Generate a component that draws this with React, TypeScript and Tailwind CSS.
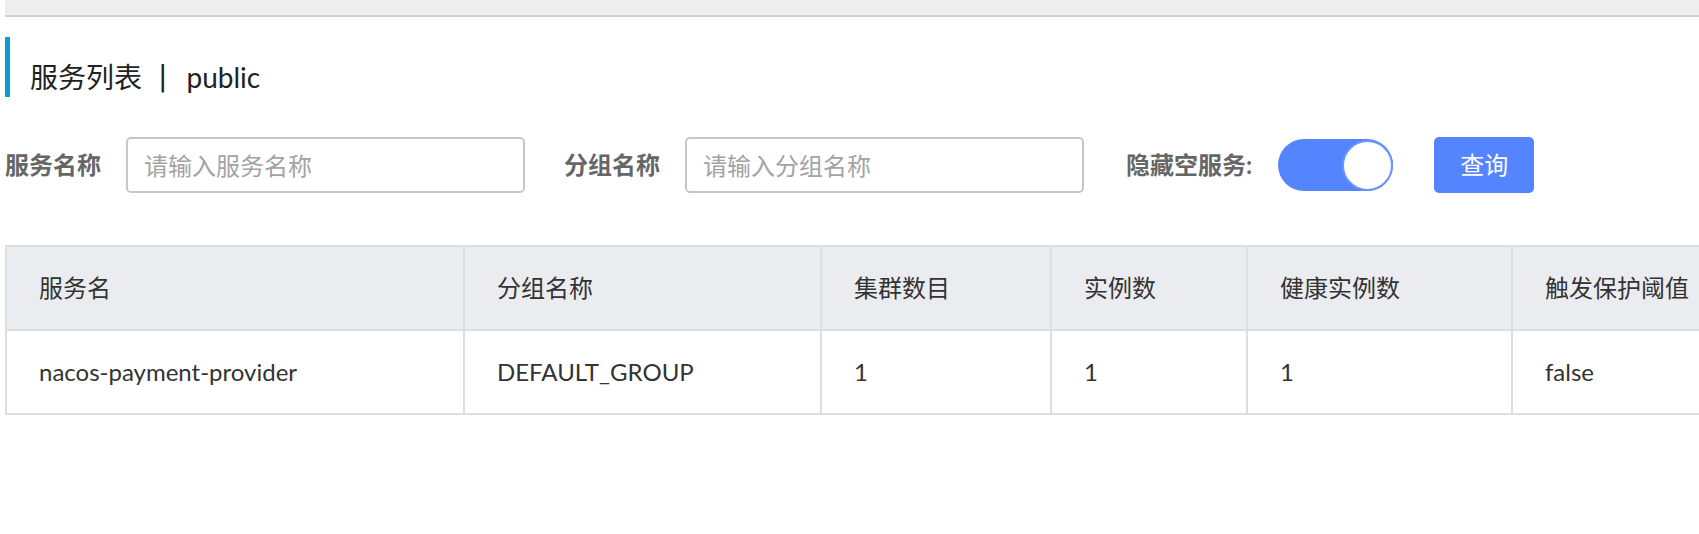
import React from 'react'

const FONT = { fontFamily: 'Lato, "Noto Sans CJK SC", sans-serif' }
const SEP = { fontFamily: '"DejaVu Sans", sans-serif' }

const columns = [
  { title: '服务名', value: 'nacos-payment-provider' },
  { title: '分组名称', value: 'DEFAULT_GROUP' },
  { title: '集群数目', value: '1' },
  { title: '实例数', value: '1' },
  { title: '健康实例数', value: '1' },
  { title: '触发保护阈值', value: 'false' },
]

export default function App() {
  return (
    <div className="w-[1699px] h-[534px] overflow-hidden bg-white text-[#333]" style={FONT}>
      {/* top strip */}
      <div className="ml-[5px] h-[17px] bg-[#eeeeee] border-b-2 border-[#d0d0d0]" />

      {/* page title */}
      <div className="ml-[5px] mt-[20px] h-[60px] border-l-[5px] border-[#0c9dd0] flex items-center pt-[20px] pl-[20px] text-[28px] text-[#222]">
        <span>服务列表</span>
        <span className="ml-[16px] mr-[19px] text-[28px] leading-none text-[#222]" style={SEP}>|</span>
        <span>public</span>
      </div>

      {/* search form */}
      <div className="ml-[5px] mt-[40px] h-[56px] flex items-center">
        <div className="flex items-center gap-[25px]">
          <label className="text-[24px] font-bold text-[#666]">服务名称</label>
          <input
            className="w-[399px] h-[56px] border-2 border-[#c4c6cf] rounded-[5px] px-[16px] text-[24px] outline-none placeholder:text-[#a3a3a3]"
            placeholder="请输入服务名称"
            style={FONT}
          />
        </div>
        <div className="flex items-center gap-[25px] ml-[39px]">
          <label className="text-[24px] font-bold text-[#666]">分组名称</label>
          <input
            className="w-[399px] h-[56px] border-2 border-[#c4c6cf] rounded-[5px] px-[16px] text-[24px] outline-none placeholder:text-[#a3a3a3]"
            placeholder="请输入分组名称"
            style={FONT}
          />
        </div>
        <div className="flex items-center gap-[26px] ml-[42px]">
          <label className="text-[24px] font-bold text-[#666]">隐藏空服务:</label>
          <div className="w-[115px] h-[52px] rounded-full bg-[#5584ff] flex items-center justify-end">
            <div className="w-[51px] h-[51px] rounded-full bg-white border-2 border-[#6b94ff]" />
          </div>
        </div>
        <button className="ml-[41px] w-[100px] h-[56px] rounded-[5px] bg-[#5584ff] text-white text-[24px]" style={FONT}>
          查询
        </button>
      </div>

      {/* service table */}
      <div className="ml-[5px] mt-[52px] w-[1900px] border-t-2 border-l-2 border-[#dcdee3] grid grid-cols-[458px_357px_230px_196px_265px_394px]">
        {columns.map((col) => (
          <div
            key={'h-' + col.title}
            className="h-[84px] bg-[#ebecf0] border-r-2 border-b-2 border-[#dcdee3] flex items-center pl-[32px] text-[24px] text-[#333]"
          >
            {col.title}
          </div>
        ))}
        {columns.map((col) => (
          <div
            key={'b-' + col.title}
            className="h-[84px] bg-white border-r-2 border-b-2 border-[#dcdee3] flex items-center pl-[32px] text-[24px] text-[#333]"
          >
            {col.value}
          </div>
        ))}
      </div>
    </div>
  )
}
